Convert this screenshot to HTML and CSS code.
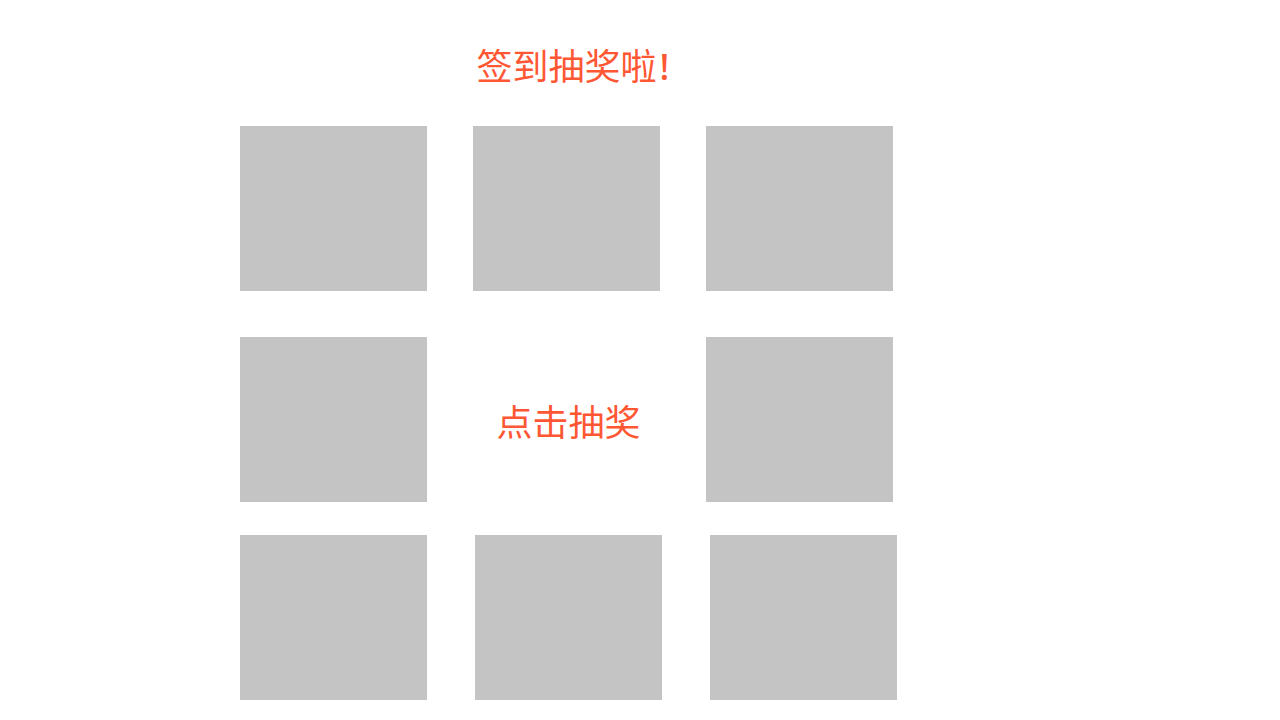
FILE: index.html
```html
<!DOCTYPE html>
<html lang="zh-CN">
<head>
<meta charset="utf-8">
<title>签到抽奖</title>
<link rel="stylesheet" href="styles.css">
</head>
<body>
<div class="page">
  <h1 class="title">签到抽奖啦<span class="bang">!</span></h1>
  <div class="row row-top">
    <div class="prize"></div>
    <div class="prize"></div>
    <div class="prize"></div>
  </div>
  <div class="row row-mid">
    <div class="prize"></div>
    <div class="draw">点击抽奖</div>
    <div class="prize"></div>
  </div>
  <div class="row row-bottom">
    <div class="prize"></div>
    <div class="prize"></div>
    <div class="prize"></div>
  </div>
</div>
</body>
</html>
```
FILE: styles.css
```css
html, body {
  margin: 0;
  padding: 0;
  background: #ffffff;
}
body {
  font-family: "Noto Sans CJK SC", "Noto Sans", sans-serif;
  color: #ff5733;
}
.page {
  padding: 38px 0 0 240px;
}
.title {
  width: 666px;
  height: 52px;
  margin: 0 0 36px 0;
  text-align: center;
  font-size: 36px;
  font-weight: 400;
  line-height: 52px;
}
.bang {
  padding-left: 3px;
  font-family: "Noto Sans", sans-serif;
  font-weight: 500;
  line-height: 1;
}
.row {
  display: flex;
}
.row-top {
  gap: 46px;
  margin-bottom: 46px;
}
.row-mid {
  margin-bottom: 33px;
}
.row-bottom {
  gap: 48px;
}
.prize {
  width: 187px;
  height: 165px;
  background: #c4c4c4;
  flex: none;
}
.draw {
  width: 279px;
  box-sizing: border-box;
  padding: 0 0 0 4px;
  display: flex;
  align-items: center;
  justify-content: center;
  font-size: 36px;
  line-height: 52px;
  cursor: pointer;
}
```
